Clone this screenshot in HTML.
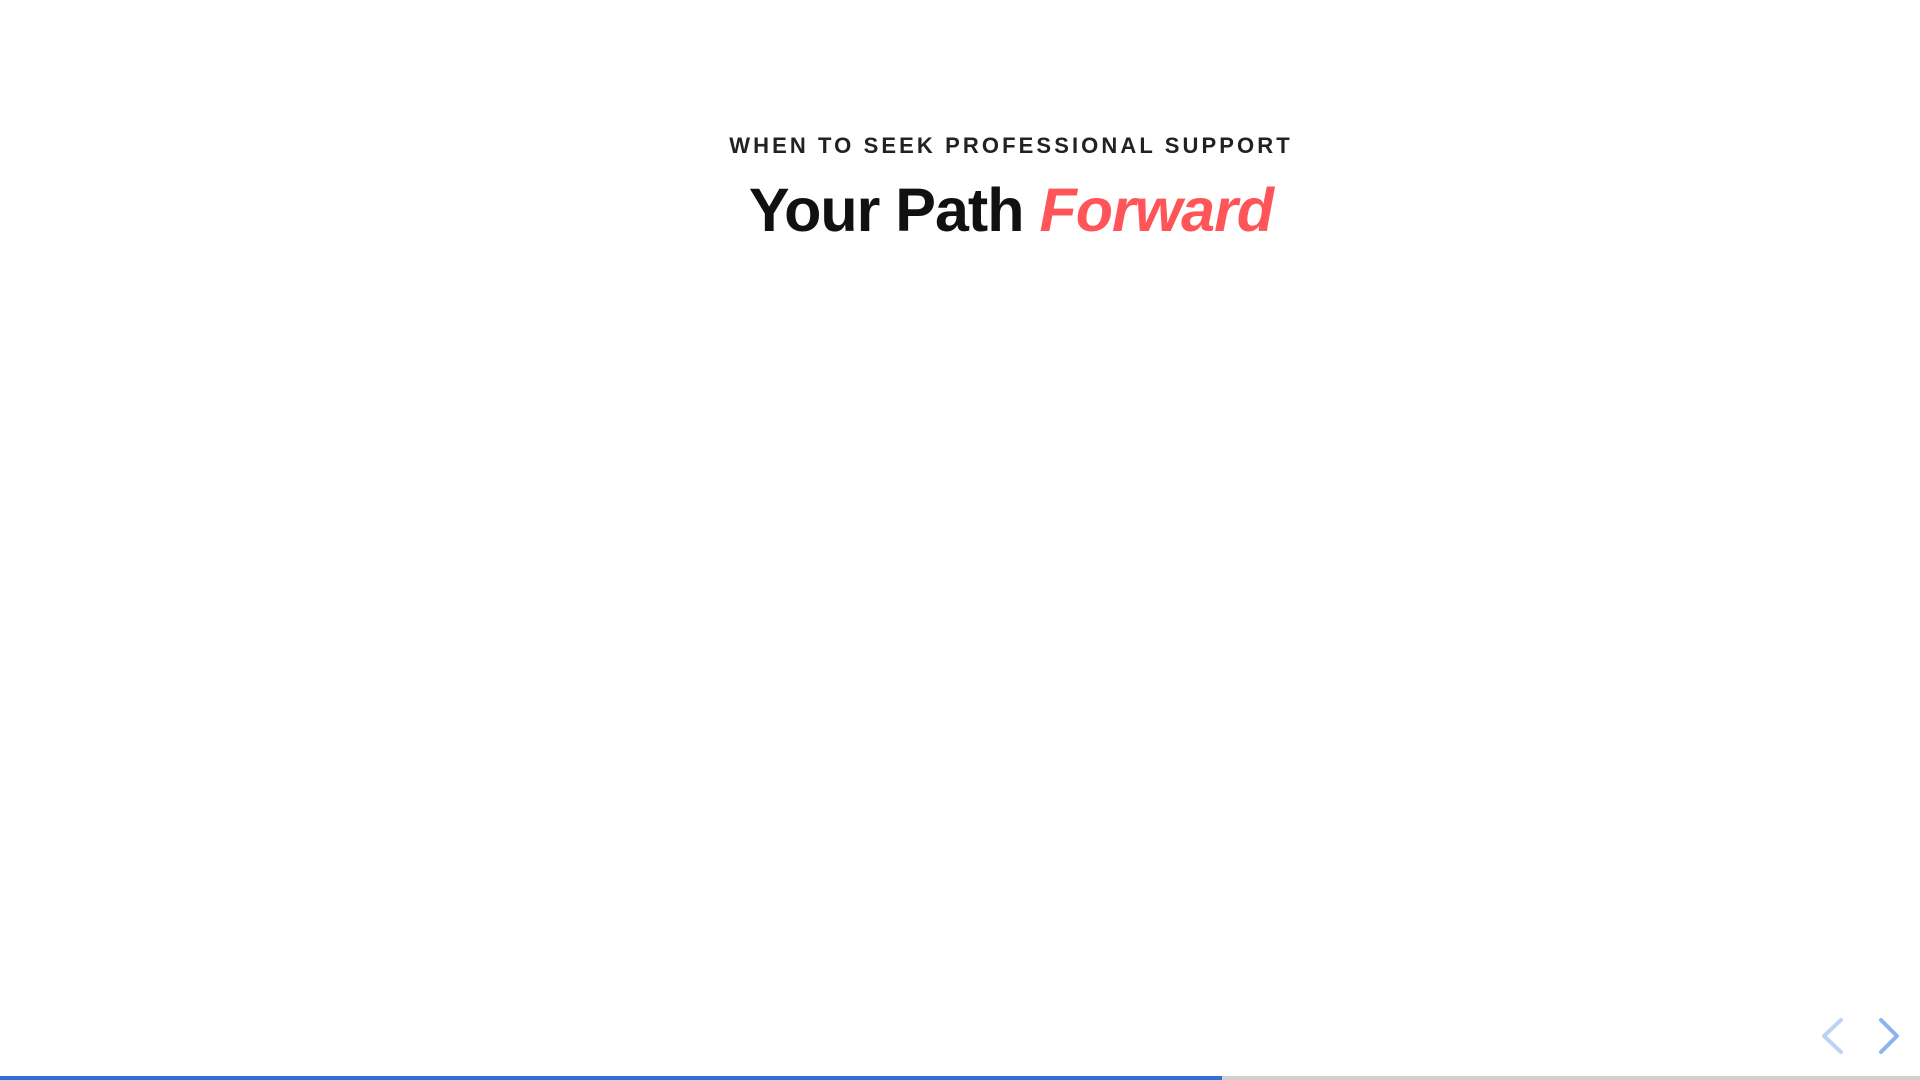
<!DOCTYPE html>
<html><head><style>
html,body{margin:0;padding:0;width:1920px;height:1080px;background:#fff;overflow:hidden;font-family:"Liberation Sans",sans-serif;}
.wrap{position:absolute;left:511px;width:1000px;text-align:center;}
.sub{top:133px;font-size:22px;font-weight:600;letter-spacing:3.1px;color:#222;}
.title{top:175px;font-size:61px;font-weight:700;color:#111;letter-spacing:-1px;}
.title i{color:#ff5458;}
.bar{position:absolute;left:0;bottom:0;width:1920px;height:4px;background:#d0d0d0;}
.bar div{width:1222px;height:100%;background:#2f6fd6;}
</style></head><body>
<div class="wrap sub">WHEN TO SEEK PROFESSIONAL SUPPORT</div>
<div class="wrap title">Your Path <i>Forward</i></div>
<svg style="position:absolute;left:1815px;top:1015px" width="100" height="45">
<path d="M26 5 L9 21 L26 37" fill="none" stroke="#bcd3f5" stroke-width="4" stroke-linecap="round" stroke-linejoin="round"/>
<path d="M66 5 L82 21 L66 37" fill="none" stroke="#8db4ee" stroke-width="4" stroke-linecap="round" stroke-linejoin="round"/>
</svg>
<div class="bar"><div></div></div>
</body></html>
